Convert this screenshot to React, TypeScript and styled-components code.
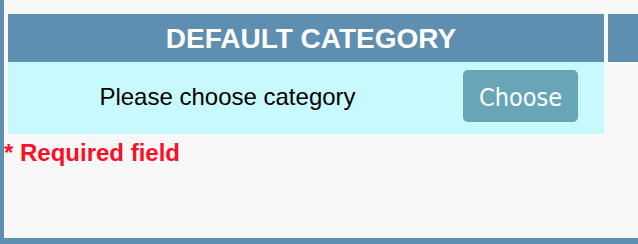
import styled, { createGlobalStyle } from "styled-components";

const GlobalStyle = createGlobalStyle`
  html, body {
    margin: 0;
    padding: 0;
    background: #f8f8f8;
  }
`;

const Page = styled.div`
  box-sizing: border-box;
  height: 244px;
  background: #f8f8f8;
  border-left: 4px solid #5e8fb0;
  border-bottom: 6px solid #5e8fb0;
  padding-top: 14px;
  font-family: "Liberation Sans", Arial, sans-serif;
  overflow: hidden;
`;

const HeaderRow = styled.div`
  display: grid;
  grid-template-columns: 596px 1fr;
  column-gap: 4px;
  padding-left: 4px;
`;

const HeaderCell = styled.div<{ $filler?: boolean }>`
  height: 48px;
  background: #5e8fb0;
  color: #ffffff;
  font-weight: bold;
  font-size: 28px;
  line-height: 49px;
  text-align: center;
  padding-left: ${(p) => (p.$filler ? "0" : "10px")};
  box-sizing: border-box;
`;

const BodyRow = styled.div`
  margin-left: 4px;
  width: 596px;
  height: 72px;
  background: #c8fafd;
  display: grid;
  grid-template-columns: 439px 1fr;
`;

const Prompt = styled.div`
  font-size: 24px;
  color: #000000;
  text-align: center;
  padding-top: 21px;
`;

const ChooseButton = styled.button`
  margin-top: 8px;
  margin-left: 16px;
  width: 115px;
  height: 52px;
  border: none;
  border-radius: 5px;
  background: #68a5b7;
  color: #ffffff;
  font-family: "DejaVu Sans Condensed", "DejaVu Sans", sans-serif;
  font-size: 25px;
  padding: 2px 0 0;
  cursor: pointer;
`;

const Required = styled.div`
  color: #fb0f26;
  font-weight: bold;
  font-size: 24px;
  line-height: 26px;
  margin-top: 6px;
`;

export default function App() {
  return (
    <>
      <GlobalStyle />
      <Page>
        <HeaderRow>
          <HeaderCell>DEFAULT CATEGORY</HeaderCell>
          <HeaderCell $filler />
        </HeaderRow>
        <BodyRow>
          <Prompt>Please choose category</Prompt>
          <div>
            <ChooseButton>Choose</ChooseButton>
          </div>
        </BodyRow>
        <Required>* Required field</Required>
      </Page>
    </>
  );
}
